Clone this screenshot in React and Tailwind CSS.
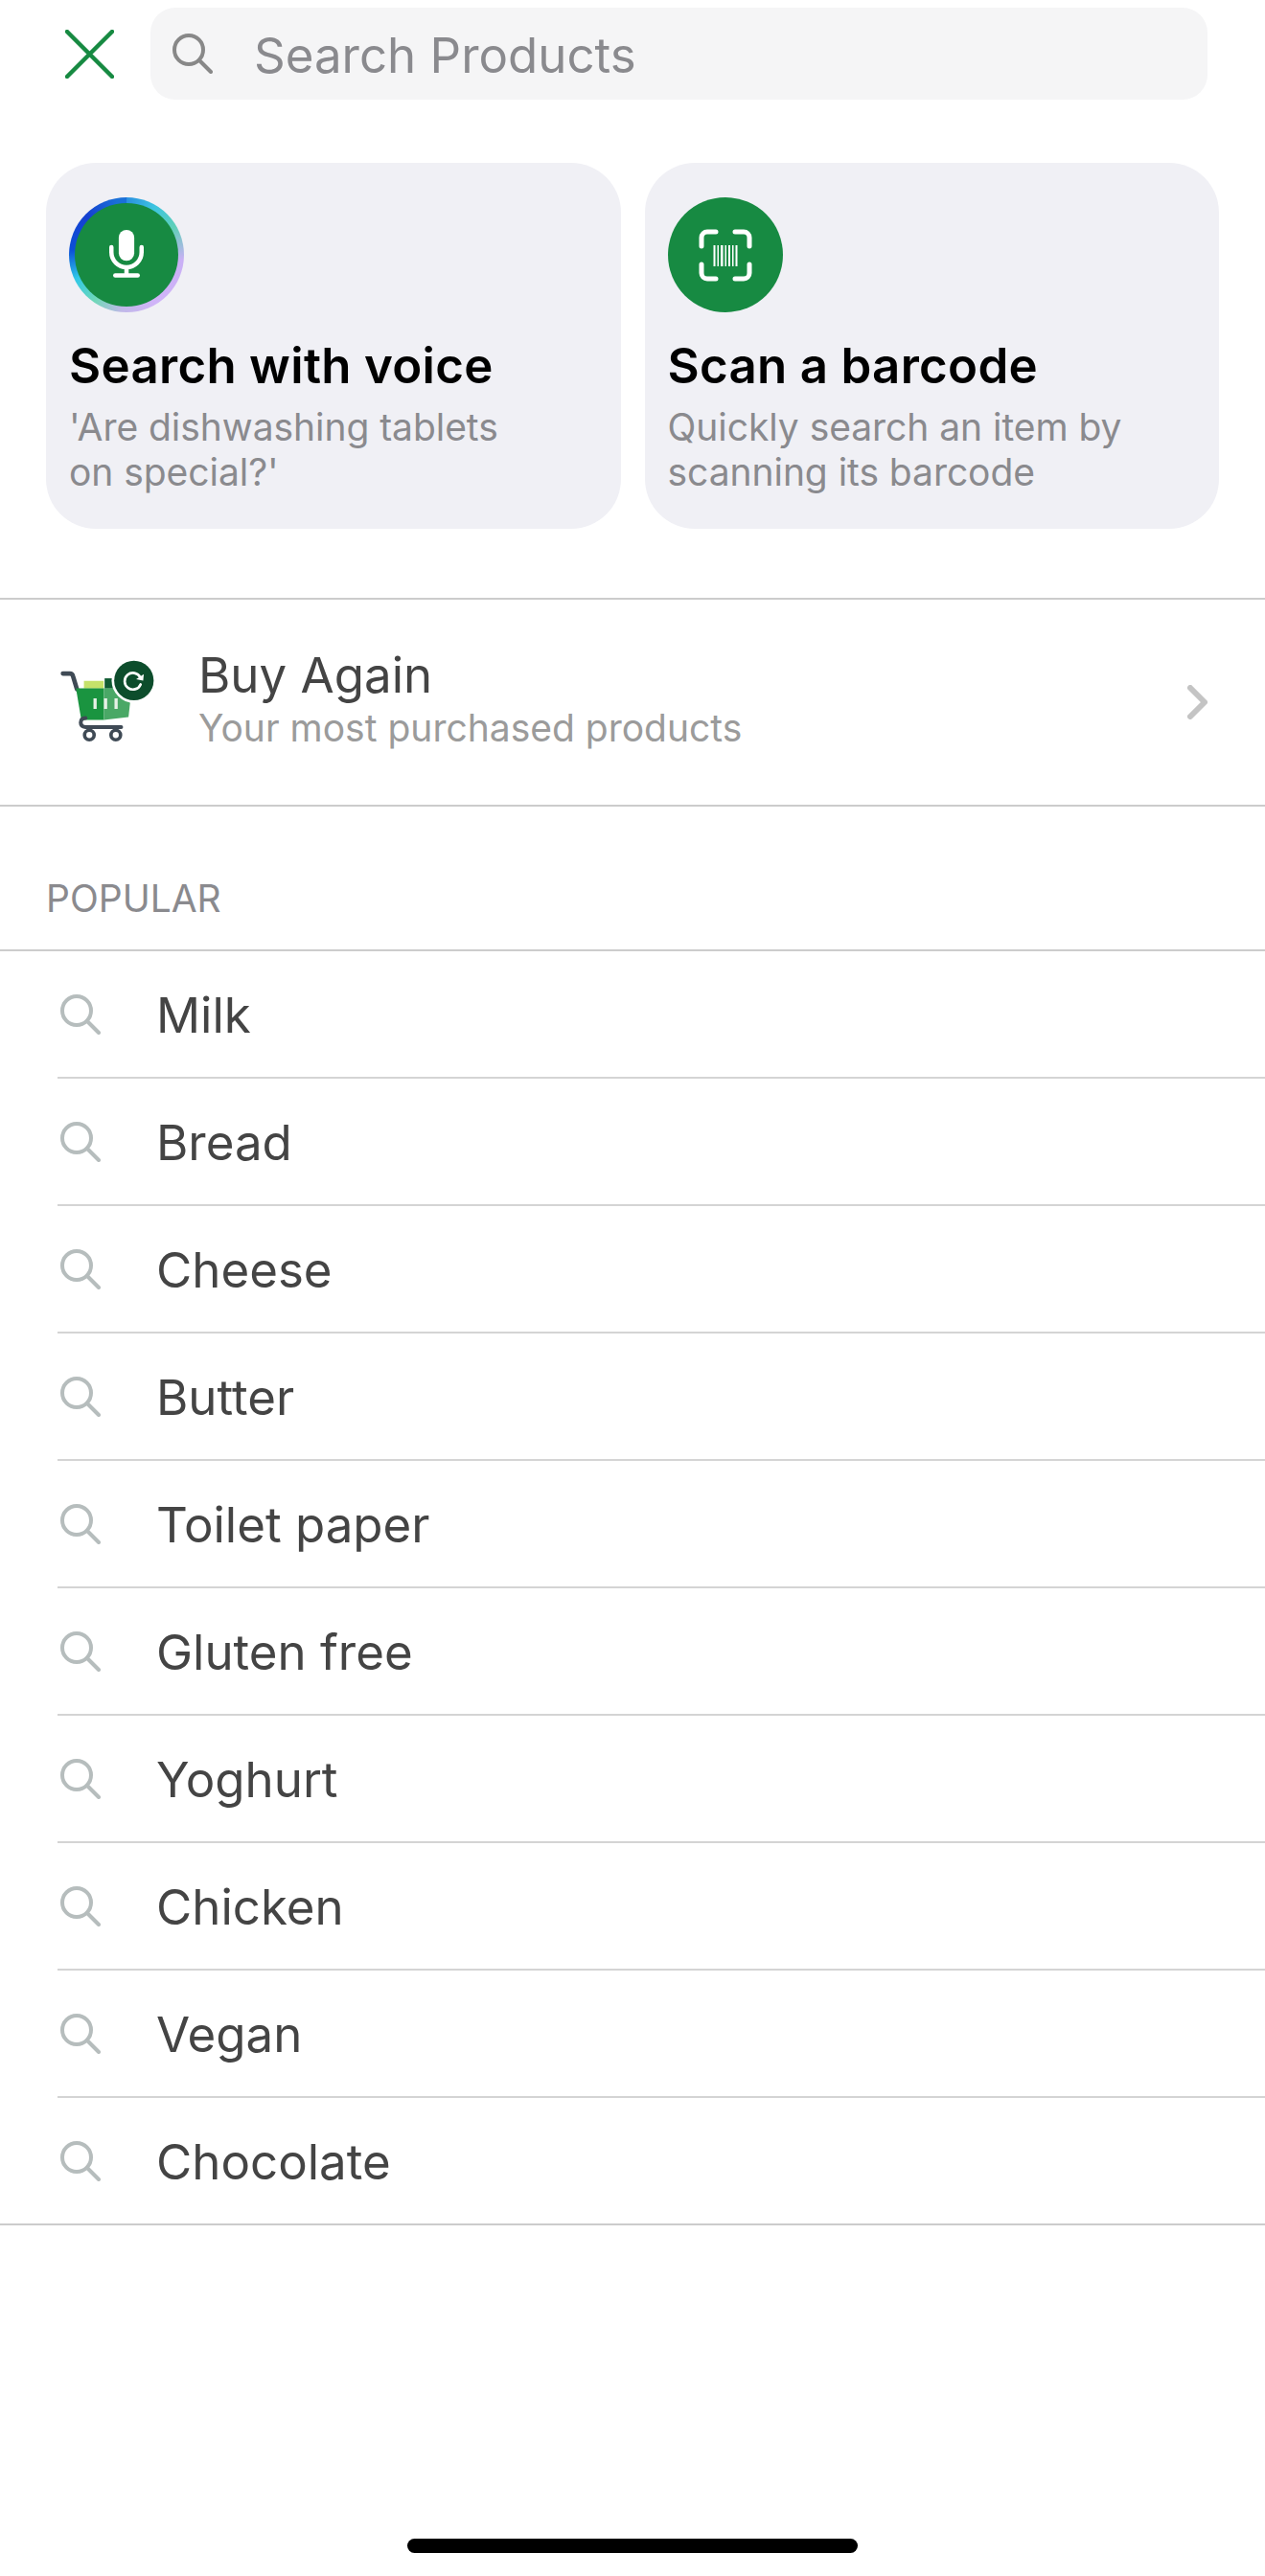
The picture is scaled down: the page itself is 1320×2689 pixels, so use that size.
const POPULAR = ['Milk', 'Bread', 'Cheese', 'Butter', 'Toilet paper', 'Gluten free', 'Yoghurt', 'Chicken', 'Vegan', 'Chocolate']

const SearchIcon = ({ className }) => (
  <svg viewBox="0 0 42 42" fill="none" stroke="currentColor" strokeWidth="4" strokeLinecap="round" className={className}>
    <circle cx="17" cy="17" r="15" />
    <path d="M28 28l12 12" />
  </svg>
)

const MicIcon = () => (
  <svg viewBox="0 0 120 120" className="w-[120px] h-[120px]" fill="none" stroke="white" strokeLinecap="round">
    <rect x="51" y="31" width="18" height="36" rx="9" fill="white" stroke="none" />
    <path d="M42.5 51v6a17.5 17.5 0 0 0 35 0v-6" strokeWidth="5" />
    <path d="M60 75v8" strokeWidth="5" />
    <path d="M47 84h26" strokeWidth="5" />
  </svg>
)

const BarcodeIcon = () => (
  <svg viewBox="0 0 120 120" className="w-[120px] h-[120px]" fill="none" stroke="white" strokeLinecap="round">
    <g strokeWidth="5">
      <path d="M50 36H41a6 6 0 0 0-6 6v9" />
      <path d="M70 36h9a6 6 0 0 1 6 6v9" />
      <path d="M50 85H41a6 6 0 0 1-6-6v-9" />
      <path d="M70 85h9a6 6 0 0 0 6-6v-9" />
    </g>
    <g fill="white" stroke="none">
      <rect x="47.5" y="50" width="2" height="22" />
      <rect x="51.5" y="50" width="1.5" height="22" />
      <rect x="55" y="50" width="2.5" height="22" />
      <rect x="59.5" y="50" width="1.5" height="22" />
      <rect x="63" y="50" width="2" height="22" />
      <rect x="67" y="50" width="1.5" height="22" />
      <rect x="70.5" y="50" width="2" height="22" />
    </g>
  </svg>
)

const CartIcon = () => (
  <svg viewBox="60 55 310 270" className="w-[103px] h-[90px] shrink-0">
    <path d="M77 100h22q8 0 10 9l12 40" fill="none" stroke="#3f4a55" strokeWidth="14" strokeLinecap="round" />
    <path d="M143 123h62v24h-62z" fill="#c5e26a" />
    <path d="M208 115h26v32h-26z" fill="#0f5a32" />
    <path d="M118 146h88v100h-66q-5 0-6-5z" fill="#1a9440" />
    <path d="M206 146h54l28 46-5 45-77 9z" fill="#4aa866" />
    <path d="M178 178v33M211 178v33M244 178v33" stroke="#e6f1e6" strokeWidth="10" />
    <path d="M148 240q-15 1-15 14t15 14h112" fill="none" stroke="#3f4a55" strokeWidth="12" strokeLinecap="round" />
    <circle cx="160" cy="293" r="15" fill="white" stroke="#3f4a55" strokeWidth="11" />
    <circle cx="243" cy="293" r="15" fill="white" stroke="#3f4a55" strokeWidth="11" />
    <circle cx="300" cy="122" r="70" fill="white" />
    <circle cx="300" cy="122" r="62" fill="#0d4d2c" />
    <path d="M320 112a26 26 0 1 0 1 22" fill="none" stroke="white" strokeWidth="8" strokeLinecap="round" />
    <path d="M307 118l22 4 2-20z" fill="white" />
  </svg>
)

const ActionCard = ({ icon, ring, title, lines }) => (
  <div className="h-[382px] rounded-[52px] bg-[#f0f0f5] pt-[36px] pl-[24px] pr-[20px]">
    {ring ? (
      <div className="w-[120px] h-[120px] rounded-full p-[6px] bg-[conic-gradient(#2a8fe0_0deg,#3cc4e0_30deg,#5fd0b8_60deg,#c9b0f5_95deg,#d0b4f8_150deg,#c0b8e8_185deg,#6fd8b8_215deg,#30c8e8_245deg,#0b50d8_275deg,#1540d0_315deg,#1a70d8_350deg)]">
        <div className="w-full h-full rounded-full bg-[#178a42] flex items-center justify-center overflow-hidden">{icon}</div>
      </div>
    ) : (
      <div className="w-[120px] h-[120px] rounded-full bg-[#178a42] flex items-center justify-center">{icon}</div>
    )}
    <div className="mt-[25px] text-[51px] leading-[62px] font-semibold tracking-[0.3px] text-black">{title}</div>
    <div className="mt-[9px] text-[39px] leading-[47px] tracking-[-0.05px] text-[#8a8a8e]">
      {lines.map((l) => (
        <div key={l}>{l}</div>
      ))}
    </div>
  </div>
)

export default function App() {
  return (
    <div className="h-[2689px] flex flex-col bg-white font-['Inter',sans-serif] overflow-hidden">
      {/* Search header */}
      <div className="flex items-center pt-[8px] pl-[68px] pr-[60px] gap-[38px]">
        <svg viewBox="0 0 51 51" className="w-[51px] h-[51px] shrink-0" fill="none" stroke="#178a42" strokeWidth="4.5" strokeLinecap="round">
          <path d="M2 2l47 47M49 2L2 49" />
        </svg>
        <div className="flex-1 h-[96px] rounded-[26px] bg-[#f5f5f6] flex items-center pl-[23px]">
          <SearchIcon className="w-[42px] h-[42px] text-[#888888] shrink-0" />
          <span className="ml-[43px] pt-[4px] text-[51px] text-[#8a8a8e]">Search Products</span>
        </div>
      </div>

      {/* Voice / barcode */}
      <div className="mt-[66px] px-[48px] grid grid-cols-2 gap-[25px]">
        <ActionCard ring icon={<MicIcon />} title="Search with voice" lines={["'Are dishwashing tablets", 'on special?\'']} />
        <ActionCard icon={<BarcodeIcon />} title="Scan a barcode" lines={['Quickly search an item by', 'scanning its barcode']} />
      </div>

      {/* Buy again */}
      <div className="mt-[72px] h-[218px] border-y-2 border-[#cccccc] flex items-center pl-[60px] pr-[60px]">
        <CartIcon />
        <div className="ml-[44px] flex-1 pb-[8px]">
          <div className="text-[51px] leading-[60px] text-[#444444]">Buy Again</div>
          <div className="mt-[1px] text-[39px] leading-[48px] text-[#9b9b9b]">Your most purchased products</div>
        </div>
        <svg viewBox="0 0 21 36" className="w-[21px] h-[36px]" fill="none" stroke="#c4c4c4" strokeWidth="6" strokeLinecap="round" strokeLinejoin="round">
          <path d="M3 3l15 15L3 33" />
        </svg>
      </div>

      {/* Popular */}
      <div className="h-[149px] flex items-end pl-[48px] pb-[31px] text-[39px] leading-[44px] text-[#8a8a8e]">POPULAR</div>
      <ul className="border-y-2 border-[#cccccc]">
        {POPULAR.map((item, i) => (
          <li
            key={item}
            className={i === POPULAR.length - 1 ? 'h-[131px] ml-[60px] flex items-center' : 'h-[133px] ml-[60px] border-b-2 border-[#d4d4d4] flex items-center'}
          >
            <SearchIcon className="w-[42px] h-[42px] ml-[3px] text-[#b6bdbd] shrink-0" />
            <span className="ml-[58px] pt-[3px] text-[51px] text-[#444444]">{item}</span>
          </li>
        ))}
      </ul>

      {/* Home indicator */}
      <div className="mt-auto pb-[24px] flex justify-center">
        <div className="w-[470px] h-[15px] rounded-[8px] bg-black" />
      </div>
    </div>
  )
}
